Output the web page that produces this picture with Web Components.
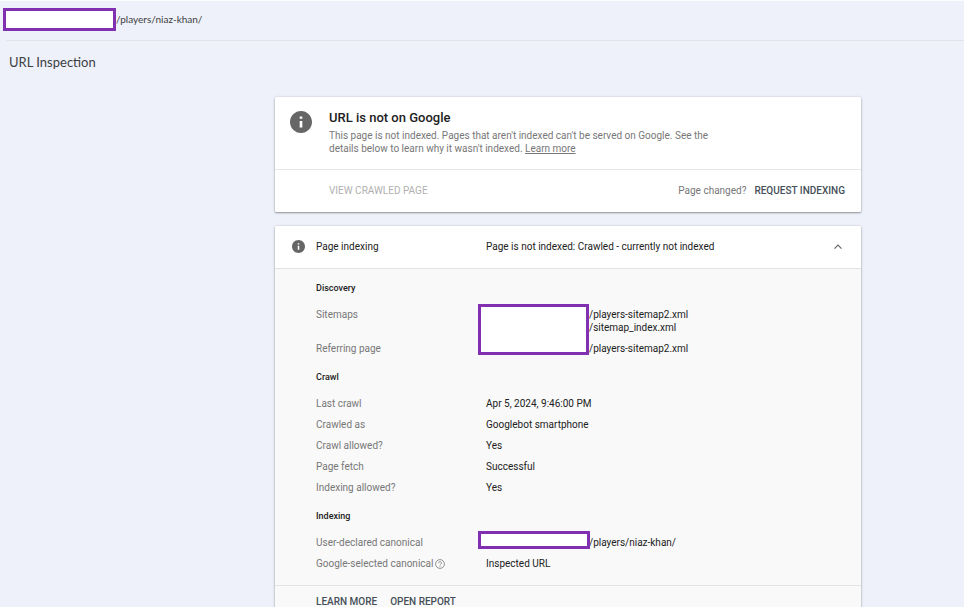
<!DOCTYPE html>
<html lang="en">
<head>
<meta charset="utf-8">
<title>URL Inspection</title>
<style>
html, body { margin: 0; height: 100%; }
body { background: #eef1f9; font: 10px/13px Roboto, "Liberation Sans", sans-serif; color: #212121; overflow: hidden; }
</style>
</head>
<body>
<inspection-page></inspection-page>
<script>
const define = (name, html) => customElements.define(name, class extends HTMLElement {
  constructor() {
    super();
    const t = document.createElement('template');
    t.innerHTML = html;
    this.attachShadow({ mode: 'open' }).append(t.content.cloneNode(true));
  }
});

define('info-icon', `
<style>:host { display: block; width: 13px; height: 13px } svg { display: block; width: 100%; height: 100% }</style>
<svg viewBox="2 2 20 20" aria-hidden="true"><path fill="#666" d="M12 2C6.48 2 2 6.48 2 12s4.48 10 10 10 10-4.480 10-10S17.520 2 12 2zm1.200 15h-2.400v-6h2.400v6zm0-8h-2.400V7h2.400v2z"/></svg>`);

define('redacted-box', `
<style>:host { display: block; box-sizing: border-box; background: #fff; border: 3px solid #8030b0 }</style>`);

define('text-button', `
<style>
:host { display: inline-block }
button { display: block; border: 0; padding: 0; background: none; font: 500 10px/13px Roboto, sans-serif; color: #455058; text-transform: uppercase }
:host([muted]) button { color: #b0b0b0; font-weight: 400 }
</style>
<button type="button"><slot></slot></button>`);

define('panel-card', `
<style>:host { display: block; background: #fff; border-radius: 1px; box-shadow: 0 1px 2px rgba(0,0,0,.36), 0 0 3px rgba(0,0,0,.12) }</style>
<slot></slot>`);

define('data-row', `
<style>
:host { display: grid; grid-template-columns: 170px 1fr; align-items: start }
.label { color: #777; display: flex; align-items: center; gap: 2px }
</style>
<div class="label"><slot name="label"></slot></div><div><slot></slot></div>`);

define('data-section', `
<style>
:host { display: block }
h3 { margin: 0 0 13px; font: 500 9px/13px Roboto, sans-serif }
.rows { display: grid; grid-auto-rows: auto; row-gap: 8px }
</style>
<h3><slot name="title"></slot></h3><div class="rows"><slot></slot></div>`);

define('url-bar', `
<style>
:host { display: block; border-top: 1px solid #fbfcfe; padding: 7px 0 9px 3px }
.line { display: flex; align-items: center; font: 10px/13px Lato, sans-serif; color: #3c4043 }
redacted-box { width: 113px; height: 23px }
</style>
<div class="line"><redacted-box></redacted-box><slot></slot></div>`);

define('status-card', `
<style>
.top { display: grid; grid-template-columns: 22px 1fr; column-gap: 17px; padding: 13px 150px 14px 15px; border-bottom: 1px solid #e6e6e6 }
info-icon { width: 22px; height: 22px; margin-top: 1px }
h2 { margin: 0 0 3px; font: 500 13px/16px Roboto, sans-serif }
p { margin: 0; color: #777 }
a { color: inherit }
.actions { display: flex; align-items: center; padding: 14px 16px 15px 54px; gap: 8px; color: #777 }
.actions span { margin-left: auto }
</style>
<panel-card>
 <div class="top"><info-icon></info-icon><div><h2>URL is not on Google</h2>
 <p>This page is not indexed. Pages that aren't indexed can't be served on Google. See the<br>details below to learn why it wasn't indexed. <a href="#">Learn more</a></p></div></div>
 <div class="actions"><text-button muted>View crawled page</text-button><span>Page changed?</span><text-button>Request indexing</text-button></div>
</panel-card>`);

define('indexing-card', `
<style>
.head { display: grid; grid-template-columns: 13px 159px 1fr 10px; align-items: center; column-gap: 11px; padding: 14px 18px 15px 17px; border-bottom: 1px solid #e2e2e2 }
.toggle { border: 0; padding: 0; background: none; width: 10px; height: 10px }
.toggle svg { display: block }
.body { background: #f9f9f9; padding: 13px 16px 15px 41px; display: grid; row-gap: 16px }
.foot { background: #f9f9f9; border-top: 1px solid #e2e2e2; padding: 9px 16px 14px 41px; display: flex; gap: 13px }
.cover { position: relative; padding-left: 103px }
.cover redacted-box { position: absolute; left: -8px; width: 111px }
.cover .tall { top: -4px; height: 51px }
.cover .short { top: -5px; height: 18px; width: 112px }
.after { padding-left: 103px }
</style>
<panel-card>
 <div class="head"><info-icon></info-icon><span>Page indexing</span><span>Page is not indexed: Crawled - currently not indexed</span>
 <button class="toggle" type="button" aria-label="Collapse"><svg width="10" height="10" viewBox="0 0 10 10"><path d="M1.500 6.700 5 3.200l3.500 3.500" fill="none" stroke="#666" stroke-width="1.200"/></svg></button></div>
 <div class="body">
  <data-section><span slot="title">Discovery</span>
   <data-row><span slot="label">Sitemaps</span><div class="cover">/players-sitemap2.xml<br>/sitemap_index.xml<redacted-box class="tall"></redacted-box></div></data-row>
   <data-row><span slot="label">Referring page</span><div class="after">/players-sitemap2.xml</div></data-row>
  </data-section>
  <data-section><span slot="title">Crawl</span>
   <data-row><span slot="label">Last crawl</span>Apr 5, 2024, 9:46:00 PM</data-row>
   <data-row><span slot="label">Crawled as</span>Googlebot smartphone</data-row>
   <data-row><span slot="label">Crawl allowed?</span>Yes</data-row>
   <data-row><span slot="label">Page fetch</span>Successful</data-row>
   <data-row><span slot="label">Indexing allowed?</span>Yes</data-row>
  </data-section>
  <data-section><span slot="title">Indexing</span>
   <data-row><span slot="label">User-declared canonical</span><div class="cover">/players/niaz-khan/<redacted-box class="short"></redacted-box></div></data-row>
   <data-row><span slot="label">Google-selected canonical</span><svg slot="label" width="10" height="10" viewBox="0 0 10 10" aria-hidden="true"><circle cx="5" cy="5" r="4.400" fill="none" stroke="#777" stroke-width=".8"/><path d="M3.600 4.100a1.400 1.400 0 1 1 2.100 1.200Q5 5.700 5 6.300M5 7v.9" fill="none" stroke="#777" stroke-width=".8"/></svg>Inspected URL</data-row>
  </data-section>
 </div>
 <div class="foot"><text-button>Learn more</text-button><text-button>Open report</text-button></div>
</panel-card>`);

define('inspection-page', `
<style>
:host { display: block; height: 100%; overflow: hidden }
h1 { margin: 0 0 0 9px; padding: 13px 0; font: 13px/16px Lato, sans-serif; color: #3c4043 }
hr { margin: 0 0 0 6px; border: 0; height: 1px; background: #e2e4ea }
main { display: grid; row-gap: 14px; padding: 14px 103px 0 275px }
</style>
<url-bar>/players/niaz-khan/</url-bar><hr>
<h1>URL Inspection</h1>
<main><status-card></status-card><indexing-card></indexing-card></main>`);
</script>
</body>
</html>
